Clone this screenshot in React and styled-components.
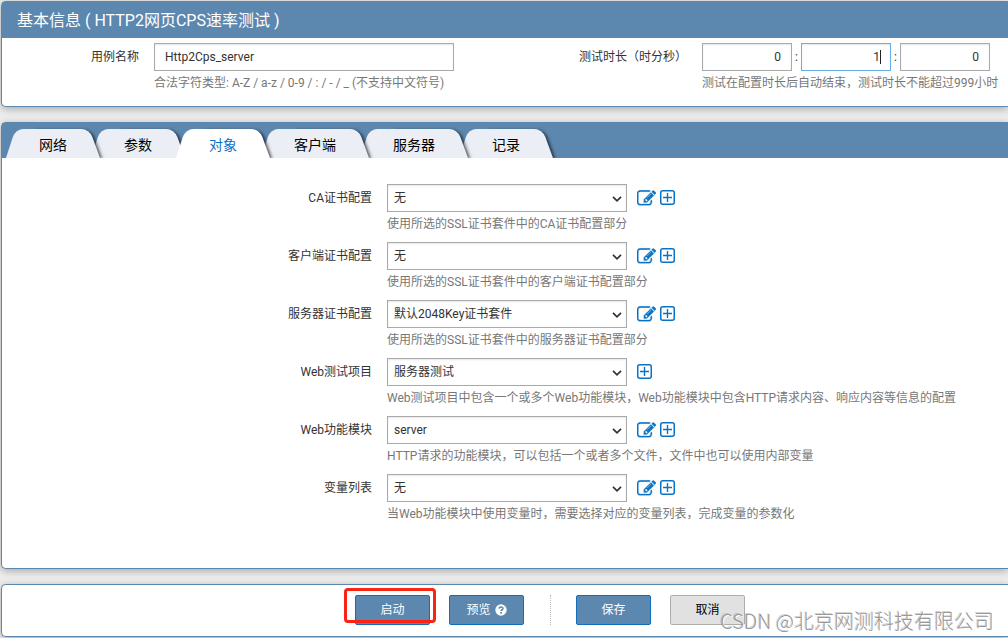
import React, { useState } from "react";
import styled, { createGlobalStyle, css } from "styled-components";

const blue = "#5c87af";
const link = "#0b72c4";
const font = `Roboto, "Noto Sans CJK SC", sans-serif`;

const GlobalStyle = createGlobalStyle`
  *, *::before, *::after { box-sizing: border-box; }
  body {
    margin: 0;
    background: #eeeeee;
    color: #333;
    font: 12px/18px ${font};
  }
  button, input, select { font: inherit; color: inherit; }
`;

const Page = styled.main`
  position: relative;
  display: flex;
  flex-direction: column;
  gap: 15px;
  padding: 1px 0 2px 1px;
  overflow: hidden;
`;

const Panel = styled.section`
  background: #fff;
  border: 1px solid ${blue};
  border-right: 0;
  border-radius: 5px 0 0 5px;
  box-shadow: 0 2px 8px rgba(0, 0, 0, 0.3);
`;

const PanelTitle = styled.h1`
  margin: 0;
  padding: 7px 15px 5px;
  background: ${blue};
  color: #fff;
  font-size: 16px;
  line-height: 24px;
  font-weight: 400;
`;

const InfoForm = styled.div`
  display: grid;
  grid-template-columns: 152px 1fr 152px 306px;
  padding: 5px 0 14px;
`;

const Label = styled.label`
  padding-right: 15px;
  line-height: 28px;
  text-align: right;
  white-space: nowrap;
`;

const Field = styled.div`
  min-width: 0;
`;

const Hint = styled.p`
  margin: 0;
  padding-top: 3px;
  color: #777;
  line-height: 18px;
  white-space: nowrap;
`;

const boxed = css`
  height: 28px;
  border: 1px solid #aaa;
  border-radius: 0;
  background: #fff;
  box-shadow: inset 0 1px 2px rgba(0, 0, 0, 0.1);
  outline: none;
`;

const TextInput = styled.input`
  ${boxed}
  display: block;
  width: 300px;
  max-width: 100%;
  padding: 0 10px;
`;

const Duration = styled.div`
  display: flex;
  line-height: 28px;
`;

const Colon = styled.span`
  width: 9px;
  text-align: center;
`;

const TimeBox = styled.span`
  position: relative;
  display: block;
  width: 90px;
  ${(p) =>
    p.$active &&
    css`
      &::after {
        content: "";
        position: absolute;
        top: 7px;
        right: 10px;
        width: 1px;
        height: 14px;
        background: #222;
      }
    `}
`;

const TimeInput = styled.input`
  ${boxed}
  display: block;
  width: 100%;
  padding: 0 10px;
  text-align: right;
  border-color: ${(p) => (p.$active ? "#66afe9" : "#aaa")};
`;

const TabBar = styled.div`
  display: flex;
  padding: 6px 0 0 4px;
  background: ${blue};
  overflow: hidden;
`;

const Tab = styled.button`
  position: relative;
  isolation: isolate;
  z-index: ${(p) => (p.$active ? 10 : p.$order)};
  height: 29px;
  margin: 0;
  padding: 3px 33px 0;
  border: 0;
  background: none;
  color: ${(p) => (p.$active ? link : "#000")};
  font-size: 14px;
  line-height: 20px;
  white-space: nowrap;
  cursor: pointer;

  & + & {
    margin-left: -9px;
  }

  &::before,
  &::after {
    content: "";
    position: absolute;
    top: 0;
    bottom: 0;
    width: 60%;
    background: ${(p) => (p.$active ? "#fff" : "#ebeff5")};
  }
  &::before {
    z-index: -1;
    left: 0;
    border-top-left-radius: 8px;
    transform: skewX(-18deg);
    transform-origin: bottom left;
  }
  &::after {
    z-index: -2;
    right: 0;
    border-top-right-radius: 8px;
    box-shadow: 2px 1px 3px rgba(0, 0, 0, 0.6);
    transform: skewX(20deg);
    transform-origin: bottom right;
  }
`;

const ObjectForm = styled.div`
  display: flex;
  flex-direction: column;
  gap: 9px;
  padding: 26px 0 45px;
`;

const Row = styled.div`
  display: grid;
  grid-template-columns: 385px 1fr;
`;

const Controls = styled.div`
  display: flex;
  align-items: center;
`;

const SelectBox = styled.span`
  position: relative;
  display: block;
  width: 240px;
  margin-right: 10px;
`;

const Select = styled.select`
  ${boxed}
  appearance: none;
  display: block;
  width: 100%;
  padding: 0 24px 0 6px;
`;

const Chevron = styled.svg`
  position: absolute;
  right: 5px;
  top: 11px;
  pointer-events: none;
`;

const IconButton = styled.button`
  display: flex;
  margin: 0 4px 0 0;
  padding: 0;
  border: 0;
  background: none;
  color: ${link};
  cursor: pointer;
`;

const Footer = styled(Panel)`
  display: flex;
  justify-content: center;
  padding: 10px 0 11px 90px;
`;

const Button = styled.button`
  display: flex;
  align-items: center;
  justify-content: center;
  gap: 4px;
  width: 75px;
  height: 30px;
  padding: 0;
  border: 1px solid ${(p) => (p.$plain ? "#adadad" : "#0f6fbd")};
  border-radius: 2px;
  background: ${(p) => (p.$plain ? "#e1e1e1" : blue)};
  color: ${(p) => (p.$plain ? "#000" : "#fff")};
  cursor: pointer;
`;

const Highlight = styled.div`
  position: relative;
  margin-right: 19px;
  &::after {
    content: "";
    position: absolute;
    top: -7px;
    left: -11px;
    width: 92px;
    height: 35px;
    border: 3px solid #fb2314;
    border-radius: 4px;
    pointer-events: none;
  }
`;

const Divider = styled.span`
  margin: 0 25px 0 26px;
  border-left: 1px dotted #bbb;
`;

const Cancel = styled(Button)`
  margin-left: 19px;
`;

const Watermark = styled.span`
  position: absolute;
  right: 14px;
  bottom: 4px;
  z-index: 20;
  color: rgba(140, 140, 140, 0.9);
  font-size: 20px;
  line-height: 28px;
  font-family: "Noto Sans CJK SC", sans-serif;
  font-weight: 300;
  text-shadow: 1px 1px 0 rgba(255, 255, 255, 0.9), -1px -1px 0 rgba(130, 130, 130, 0.35);
  white-space: nowrap;
  pointer-events: none;
`;

const EditIcon = () => (
  <svg width="19" height="19" viewBox="0 0 1792 1792" fill="currentColor" stroke="currentColor" strokeWidth="24" aria-hidden="true">
    <path d="M888 1184l116-116-152-152-116 116v56h96v96h56zm440-720q-16-16-33 1l-350 350q-17 17-1 33t33-1l350-350q17-17 1-33zm80 594v190q0 119-84.5 203.5t-203.5 84.5h-832q-119 0-203.5-84.5t-84.5-203.5v-832q0-119 84.5-203.5t203.5-84.5h832q63 0 117 25 15 7 18 23 3 17-9 29l-49 49q-14 14-32 8-23-6-45-6h-832q-66 0-113 47t-47 113v832q0 66 47 113t113 47h832q66 0 113-47t47-113v-126q0-13 9-22l64-64q15-15 35-7t20 29zm-96-738l288 288-672 672h-288v-288zm444 132l-92 92-288-288 92-92q28-28 68-28t68 28l152 152q28 28 28 68t-28 68z" />
  </svg>
);

const PlusIcon = () => (
  <svg width="15" height="18" viewBox="0 0 15 18" fill="none" stroke="currentColor" aria-hidden="true">
    <rect x="0.75" y="1.75" width="13.5" height="13.5" rx="2" strokeWidth="1.5" />
    <path d="M3 8.5h9M7.5 4v9" strokeWidth="1.4" />
  </svg>
);

const HelpIcon = () => (
  <svg width="12" height="12" viewBox="0 0 12 12" aria-hidden="true">
    <circle cx="6" cy="6" r="5.7" fill="#fff" />
    <path d="M4.1 4.6C4.2 2.5 7.9 2.5 7.9 4.5C7.9 5.8 6.1 5.7 6.1 7.1" fill="none" stroke={blue} strokeWidth="1.6" />
    <rect x="5.2" y="8" width="1.7" height="1.7" fill={blue} />
  </svg>
);

const tabs = ["网络", "参数", "对象", "客户端", "服务器", "记录"];

const rows = [
  { id: "ca", label: "CA证书配置", value: "无", hint: "使用所选的SSL证书套件中的CA证书配置部分", edit: true },
  { id: "client", label: "客户端证书配置", value: "无", hint: "使用所选的SSL证书套件中的客户端证书配置部分", edit: true },
  { id: "server", label: "服务器证书配置", value: "默认2048Key证书套件", hint: "使用所选的SSL证书套件中的服务器证书配置部分", edit: true },
  { id: "project", label: "Web测试项目", value: "服务器测试", hint: "Web测试项目中包含一个或多个Web功能模块，Web功能模块中包含HTTP请求内容、响应内容等信息的配置", edit: false },
  { id: "module", label: "Web功能模块", value: "server", hint: "HTTP请求的功能模块，可以包括一个或者多个文件，文件中也可以使用内部变量", edit: true },
  { id: "vars", label: "变量列表", value: "无", hint: "当Web功能模块中使用变量时，需要选择对应的变量列表，完成变量的参数化", edit: true },
];

export default function App() {
  const [active, setActive] = useState(2);
  return (
    <>
      <GlobalStyle />
      <Page>
        <Panel>
          <PanelTitle>基本信息 ( HTTP2网页CPS速率测试 )</PanelTitle>
          <InfoForm>
            <Label htmlFor="name">用例名称</Label>
            <Field>
              <TextInput id="name" defaultValue="Http2Cps_server" />
              <Hint>合法字符类型: A-Z / a-z / 0-9 / : / - / _ (不支持中文符号)</Hint>
            </Field>
            <Label htmlFor="hours">测试时长（时分秒）</Label>
            <Field>
              <Duration>
                <TimeBox>
                  <TimeInput id="hours" aria-label="时" defaultValue="0" />
                </TimeBox>
                <Colon>:</Colon>
                <TimeBox $active>
                  <TimeInput $active aria-label="分" defaultValue="1" />
                </TimeBox>
                <Colon>:</Colon>
                <TimeBox>
                  <TimeInput aria-label="秒" defaultValue="0" />
                </TimeBox>
              </Duration>
              <Hint>测试在配置时长后自动结束，测试时长不能超过999小时</Hint>
            </Field>
          </InfoForm>
        </Panel>

        <Panel>
          <TabBar role="tablist">
            {tabs.map((name, i) => (
              <Tab
                key={name}
                type="button"
                role="tab"
                aria-selected={i === active}
                $active={i === active}
                $order={tabs.length - i}
                onClick={() => setActive(i)}
              >
                {name}
              </Tab>
            ))}
          </TabBar>
          <ObjectForm>
            {rows.map((row) => (
              <Row key={row.id}>
                <Label htmlFor={row.id}>{row.label}</Label>
                <Field>
                  <Controls>
                    <SelectBox>
                      <Select id={row.id} defaultValue={row.value}>
                        <option>{row.value}</option>
                      </Select>
                      <Chevron width="10" height="8" viewBox="0 0 10 8" fill="none" stroke="#333" strokeWidth="1.7">
                        <path d="M1 1.8L5 5.8L9 1.8" />
                      </Chevron>
                    </SelectBox>
                    {row.edit && (
                      <IconButton type="button" aria-label="编辑">
                        <EditIcon />
                      </IconButton>
                    )}
                    <IconButton type="button" aria-label="添加">
                      <PlusIcon />
                    </IconButton>
                  </Controls>
                  <Hint>{row.hint}</Hint>
                </Field>
              </Row>
            ))}
          </ObjectForm>
        </Panel>

        <Footer>
          <Highlight>
            <Button type="button">启动</Button>
          </Highlight>
          <Button type="button">
            预览
            <HelpIcon />
          </Button>
          <Divider />
          <Button type="button">保存</Button>
          <Cancel type="button" $plain>取消</Cancel>
        </Footer>
        <Watermark>CSDN @北京网测科技有限公司</Watermark>
      </Page>
    </>
  );
}
